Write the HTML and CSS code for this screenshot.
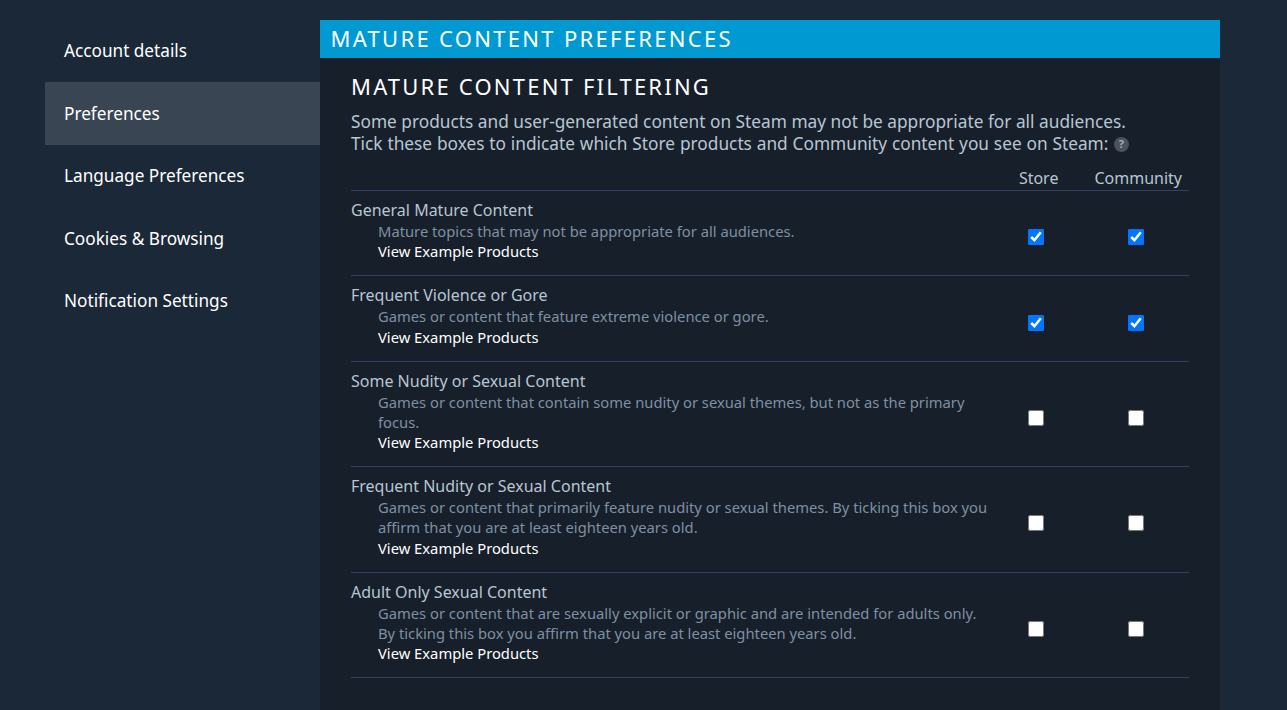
FILE: index.html
```html
<!DOCTYPE html>
<html lang="en">
<head>
    <meta charset="UTF-8">
    <title>Mature Content Preferences</title>
    <link rel="stylesheet" href="styles.css">
</head>
<body>
    <div class="page">
        <nav class="sidebar">
            <a class="side-link" href="#">Account details</a>
            <a class="side-link active" href="#">Preferences</a>
            <a class="side-link" href="#">Language Preferences</a>
            <a class="side-link" href="#">Cookies &amp; Browsing</a>
            <a class="side-link" href="#">Notification Settings</a>
        </nav>
        <main class="panel">
            <h1 class="panel-title">MATURE CONTENT PREFERENCES</h1>
            <div class="panel-body">
                <h2 class="section-title">MATURE CONTENT FILTERING</h2>
                <p class="intro">Some products and user-generated content on Steam may not be appropriate for all audiences.<br><span class="intro-tick">Tick these boxes to indicate which Store products and Community content you see on Steam:</span> <span class="help">?</span></p>
                <div class="col-heads">
                    <span class="col-head store">Store</span>
                    <span class="col-head community">Community</span>
                </div>
                <div class="row">
                    <div class="row-text">
                        <div class="row-title">General Mature Content</div>
                        <div class="row-desc">Mature topics that may not be appropriate for all audiences.</div>
                        <a class="row-link" href="#">View Example Products</a>
                    </div>
                    <div class="row-check"><input type="checkbox" checked></div>
                    <div class="row-check"><input type="checkbox" checked></div>
                </div>
                <div class="row">
                    <div class="row-text">
                        <div class="row-title">Frequent Violence or Gore</div>
                        <div class="row-desc">Games or content that feature extreme violence or gore.</div>
                        <a class="row-link" href="#">View Example Products</a>
                    </div>
                    <div class="row-check"><input type="checkbox" checked></div>
                    <div class="row-check"><input type="checkbox" checked></div>
                </div>
                <div class="row">
                    <div class="row-text">
                        <div class="row-title">Some Nudity or Sexual Content</div>
                        <div class="row-desc">Games or content that contain some nudity or sexual themes, but not as the primary focus.</div>
                        <a class="row-link" href="#">View Example Products</a>
                    </div>
                    <div class="row-check"><input type="checkbox"></div>
                    <div class="row-check"><input type="checkbox"></div>
                </div>
                <div class="row">
                    <div class="row-text">
                        <div class="row-title">Frequent Nudity or Sexual Content</div>
                        <div class="row-desc">Games or content that primarily feature nudity or sexual themes. By ticking this box you affirm that you are at least eighteen years old.</div>
                        <a class="row-link" href="#">View Example Products</a>
                    </div>
                    <div class="row-check"><input type="checkbox"></div>
                    <div class="row-check"><input type="checkbox"></div>
                </div>
                <div class="row">
                    <div class="row-text">
                        <div class="row-title">Adult Only Sexual Content</div>
                        <div class="row-desc">Games or content that are sexually explicit or graphic and are intended for adults only. By ticking this box you affirm that you are at least eighteen years old.</div>
                        <a class="row-link" href="#">View Example Products</a>
                    </div>
                    <div class="row-check"><input type="checkbox"></div>
                    <div class="row-check"><input type="checkbox"></div>
                </div>
            </div>
        </main>
    </div>
</body>
</html>
```
FILE: styles.css
```css
/* Reset and Body Styling */
* {
    margin: 0;
    padding: 0;
    box-sizing: border-box;
}
html, body {
    height: 100%;
    overflow: hidden;
}
body {
    font-family: 'Noto Sans', sans-serif;
    background-color: #1b2838;
    color: #ffffff;
}

.page {
    display: flex;
    padding: 20px 67px 0 45px;
    height: 100%;
}

/* Sidebar */
.sidebar {
    width: 275px;
    flex: none;
    margin-top: -0.5px;
}
.side-link {
    display: flex;
    align-items: center;
    height: 62.5px;
    padding-left: 19px;
    font-size: 17.2px;
    color: #ffffff;
    text-decoration: none;
}
.side-link.active {
    background-color: #3a4554;
}

/* Panel */
.panel {
    flex: 1;
    min-width: 0;
    background-color: #171f2b;
}
.panel-title {
    height: 38px;
    padding-left: 10.5px;
    background-color: #0099d1;
    font-size: 22px;
    font-weight: 400;
    line-height: 37px;
    letter-spacing: 2.3px;
    color: #ffffff;
}
.panel-body {
    padding: 14px 31px 0 31px;
}
.section-title {
    font-size: 22px;
    font-weight: 400;
    line-height: 29px;
    letter-spacing: 2.2px;
    color: #ffffff;
}
.intro {
    margin-top: 10px;
    font-size: 17.3px;
    line-height: 22px;
    color: #b8c6d3;
}
.intro-tick {
    word-spacing: 0.33px;
}
.help {
    display: inline-flex;
    align-items: center;
    justify-content: center;
    width: 15px;
    height: 15px;
    border-radius: 50%;
    background-color: #4a5361;
    color: #a5acb5;
    font-size: 11px;
    font-weight: 700;
    vertical-align: 2px;
    margin-left: 1px;
}

/* Column headings */
.col-heads {
    display: flex;
    justify-content: flex-end;
    height: 36px;
    padding-top: 12px;
    border-bottom: 1px solid #31415f;
    font-size: 16px;
    line-height: 22px;
    color: #b8c6d3;
}
.col-head.store {
    margin-right: 36px;
}
.col-head.community {
    margin-right: 7px;
}

/* Rows */
.row {
    display: flex;
    align-items: center;
    padding: 9px 0 13px;
    border-bottom: 1px solid #31415f;
}
.row-text {
    width: 641px;
    flex: none;
}
.row-title {
    font-size: 16px;
    line-height: 21px;
    color: #b8c6d3;
}
.row-desc {
    padding-left: 27px;
    font-size: 14.75px;
    line-height: 20px;
    color: #7f90a2;
}
.row-link {
    display: block;
    margin-top: 0.4px;
    margin-bottom: 0.6px;
    padding-left: 27px;
    font-size: 14.75px;
    line-height: 20.4px;
    color: #ffffff;
    text-decoration: none;
}
.row-check {
    display: flex;
    margin-left: 84px;
    padding-top: 12px;
}
.row-text + .row-check {
    margin-left: 36px;
}
.row-check input {
    width: 16px;
    height: 16px;
}
```
